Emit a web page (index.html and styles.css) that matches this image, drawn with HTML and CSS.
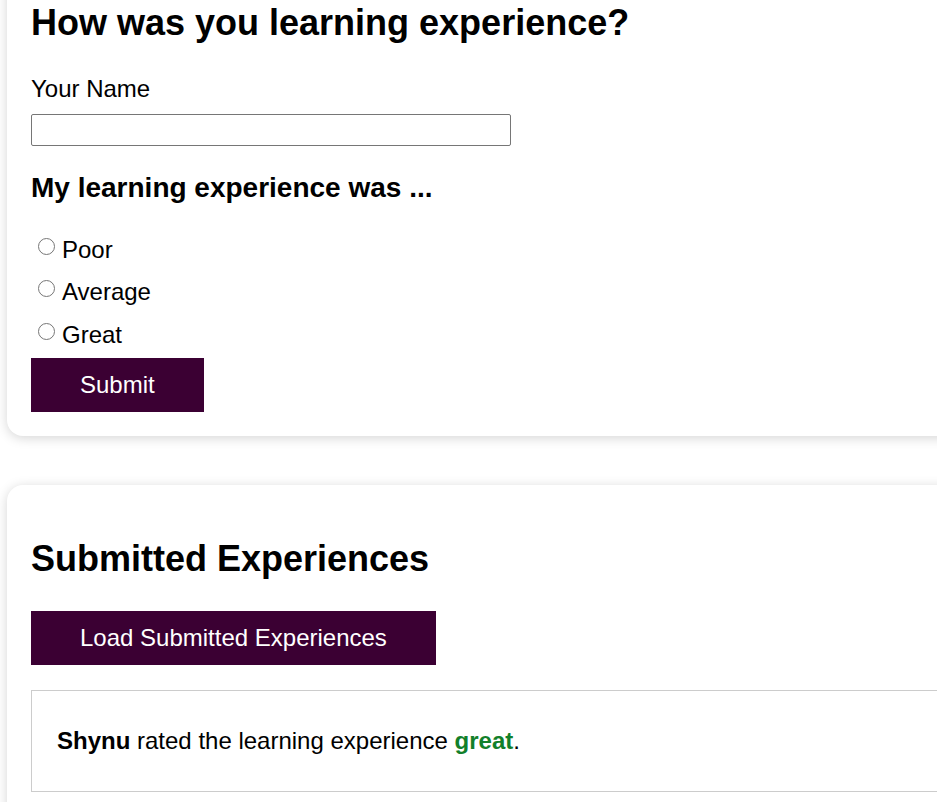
FILE: index.html
```html
<!DOCTYPE html>
<html lang="en">
<head>
<meta charset="utf-8">
<title>Learning Experience</title>
<link rel="stylesheet" href="styles.css">
</head>
<body>
<main class="page">
  <section class="card form-card">
    <h1 class="title">How was you learning experience?</h1>
    <label class="field-label" for="name">Your Name</label>
    <input class="text-input" id="name" type="text">
    <h2 class="subtitle">My learning experience was ...</h2>
    <div class="option"><input class="radio" type="radio" name="rating" id="poor"><label for="poor">Poor</label></div>
    <div class="option"><input class="radio" type="radio" name="rating" id="average"><label for="average">Average</label></div>
    <div class="option"><input class="radio" type="radio" name="rating" id="great"><label for="great">Great</label></div>
    <button class="btn btn-submit" type="button">Submit</button>
  </section>
  <section class="card list-card">
    <h1 class="title title-list">Submitted Experiences</h1>
    <button class="btn btn-load" type="button">Load Submitted Experiences</button>
    <ul class="list">
      <li class="item"><strong>Shynu</strong> rated the learning experience <strong class="great">great</strong>.</li>
    </ul>
  </section>
</main>
</body>
</html>
```

FILE: styles.css
```css
html, body {
  margin: 0;
  padding: 0;
  background: #ffffff;
}

body {
  font-family: "Liberation Sans", Arial, sans-serif;
  font-size: 24px;
  color: #000;
  overflow: hidden;
}

.page {
  padding-left: 7px;
  margin-right: -80px;
}

.card {
  background: #fff;
  border-radius: 16px;
  box-shadow: 0 2px 12px rgba(0, 0, 0, 0.17);
  padding: 24px 24px 24px;
}

.form-card {
  margin-top: -40px;
}

.list-card {
  margin-top: 49px;
  padding-bottom: 40px;
}

.title {
  font-size: 36px;
  font-weight: bold;
  margin: 18px 0 0;
}

.title-list {
  margin-top: 29px;
}

.field-label {
  display: block;
  margin: 30.8px 0 11.4px;
}

.text-input {
  display: block;
  box-sizing: border-box;
  width: 480px;
  height: 32px;
  margin: 0;
  border: 1px solid #767676;
  border-radius: 2px;
  font: inherit;
  font-size: 20px;
  padding: 2px 4px;
}

.subtitle {
  font-size: 28px;
  font-weight: bold;
  margin: 26px 0 24.5px;
}

.option {
  display: flex;
  align-items: flex-start;
  padding: 7.2px 0;
}

.radio {
  width: 17px;
  height: 17px;
  margin: 2px 7px 0 7px;
  flex: none;
}

.btn {
  display: block;
  height: 54px;
  border: none;
  border-radius: 0;
  background: #3b0033;
  color: #fff;
  font: inherit;
  padding: 0 49px;
  text-align: center;
}

.btn-submit {
  margin-top: 2px;
}

.btn-load {
  margin-top: 31px;
}

.list {
  list-style: none;
  margin: 25px 0 0;
  padding: 0;
}

.item {
  border: 1px solid #cccccc;
  padding: 36px 25px;
}

.great {
  color: #12802a;
}
```
